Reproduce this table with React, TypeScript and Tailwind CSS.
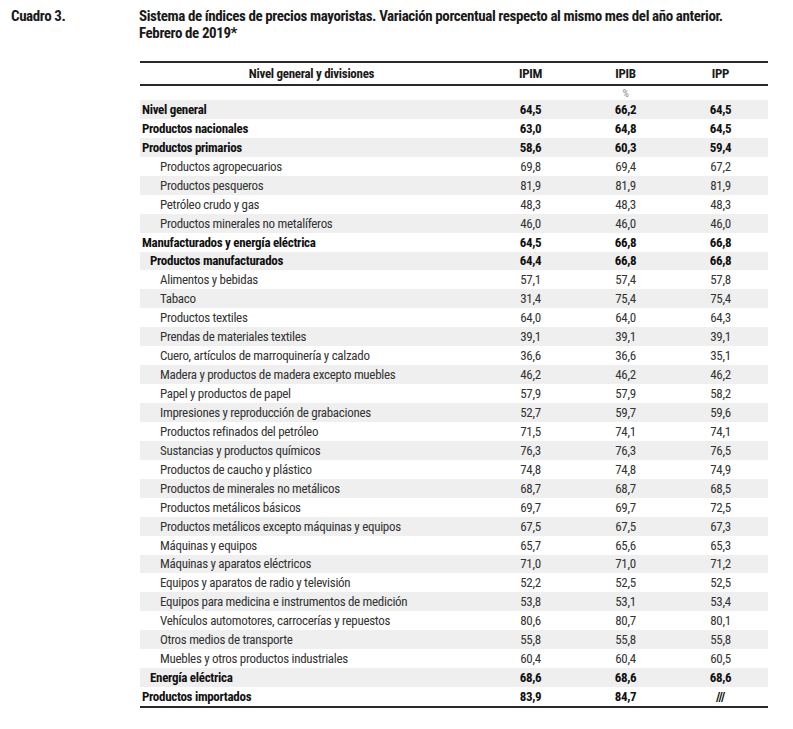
import React from "react";

type Row = { label: string; level: 0 | 1 | 2; bold?: boolean; v: [string, string, string] };

const rows: Row[] = [
  { label: "Nivel general", level: 0, bold: true, v: ["64,5", "66,2", "64,5"] },
  { label: "Productos nacionales", level: 0, bold: true, v: ["63,0", "64,8", "64,5"] },
  { label: "Productos primarios", level: 0, bold: true, v: ["58,6", "60,3", "59,4"] },
  { label: "Productos agropecuarios", level: 2, v: ["69,8", "69,4", "67,2"] },
  { label: "Productos pesqueros", level: 2, v: ["81,9", "81,9", "81,9"] },
  { label: "Petróleo crudo y gas", level: 2, v: ["48,3", "48,3", "48,3"] },
  { label: "Productos minerales no metalíferos", level: 2, v: ["46,0", "46,0", "46,0"] },
  { label: "Manufacturados y energía eléctrica", level: 0, bold: true, v: ["64,5", "66,8", "66,8"] },
  { label: "Productos manufacturados", level: 1, bold: true, v: ["64,4", "66,8", "66,8"] },
  { label: "Alimentos y bebidas", level: 2, v: ["57,1", "57,4", "57,8"] },
  { label: "Tabaco", level: 2, v: ["31,4", "75,4", "75,4"] },
  { label: "Productos textiles", level: 2, v: ["64,0", "64,0", "64,3"] },
  { label: "Prendas de materiales textiles", level: 2, v: ["39,1", "39,1", "39,1"] },
  { label: "Cuero, artículos de marroquinería y calzado", level: 2, v: ["36,6", "36,6", "35,1"] },
  { label: "Madera y productos de madera excepto muebles", level: 2, v: ["46,2", "46,2", "46,2"] },
  { label: "Papel y productos de papel", level: 2, v: ["57,9", "57,9", "58,2"] },
  { label: "Impresiones y reproducción de grabaciones", level: 2, v: ["52,7", "59,7", "59,6"] },
  { label: "Productos refinados del petróleo", level: 2, v: ["71,5", "74,1", "74,1"] },
  { label: "Sustancias y productos químicos", level: 2, v: ["76,3", "76,3", "76,5"] },
  { label: "Productos de caucho y plástico", level: 2, v: ["74,8", "74,8", "74,9"] },
  { label: "Productos de minerales no metálicos", level: 2, v: ["68,7", "68,7", "68,5"] },
  { label: "Productos metálicos básicos", level: 2, v: ["69,7", "69,7", "72,5"] },
  { label: "Productos metálicos excepto máquinas y equipos", level: 2, v: ["67,5", "67,5", "67,3"] },
  { label: "Máquinas y equipos", level: 2, v: ["65,7", "65,6", "65,3"] },
  { label: "Máquinas y aparatos eléctricos", level: 2, v: ["71,0", "71,0", "71,2"] },
  { label: "Equipos y aparatos de radio y televisión", level: 2, v: ["52,2", "52,5", "52,5"] },
  { label: "Equipos para medicina e instrumentos de medición", level: 2, v: ["53,8", "53,1", "53,4"] },
  { label: "Vehículos automotores, carrocerías y repuestos", level: 2, v: ["80,6", "80,7", "80,1"] },
  { label: "Otros medios de transporte", level: 2, v: ["55,8", "55,8", "55,8"] },
  { label: "Muebles y otros productos industriales", level: 2, v: ["60,4", "60,4", "60,5"] },
  { label: "Energía eléctrica", level: 1, bold: true, v: ["68,6", "68,6", "68,6"] },
  { label: "Productos importados", level: 0, bold: true, v: ["83,9", "84,7", "///"] },
];

const indent = { 0: "pl-[2px]", 1: "pl-[10px]", 2: "pl-[20px]" };

export default function App() {
  return (
    <div className="w-[793px] h-[729px] bg-white text-[#1a1a1a] font-['Roboto_Condensed','Roboto',sans-serif] font-stretch-condensed">
      <div className="flex pt-[8px]">
        <div className="w-[139px] pl-[11px] text-[15px] font-bold leading-[17px] tracking-[-0.4px]">Cuadro 3.</div>
        <div className="text-[15px] font-bold leading-[17px] tracking-[-0.4px]">
          <div>Sistema de índices de precios mayoristas. Variación porcentual respecto al mismo mes del año anterior.</div>
          <div>Febrero de 2019*</div>
        </div>
      </div>

      <div className="ml-[140px] mt-[19px] w-[628px] tracking-[-0.3px]">
        <div className="grid grid-cols-[343px_95px_95px_95px] h-[25px] items-center border-t-2 border-b-2 border-[#2a2a2a] text-[13px] font-bold">
          <div className="text-center">Nivel general y divisiones</div>
          <div className="text-center">IPIM</div>
          <div className="text-center">IPIB</div>
          <div className="text-center">IPP</div>
        </div>
        <div className="grid grid-cols-[343px_95px_95px_95px] h-[14px] items-center text-[10px] text-[#888]">
          <div />
          <div />
          <div className="text-center leading-none pt-[1px]">%</div>
          <div />
        </div>
        <div className="border-b-2 border-[#2a2a2a]">
          {rows.map((r, i) => (
            <div
              key={r.label}
              className={`grid grid-cols-[343px_95px_95px_95px] h-[18.95px] items-center text-[13px] leading-none ${
                i % 2 === 0 ? "bg-[#efefef]" : "bg-white"
              } ${r.bold ? "font-bold text-[#111]" : "text-[#333]"}`}
            >
              <div className={indent[r.level]}>{r.label}</div>
              <div className="text-center">{r.v[0]}</div>
              <div className="text-center">{r.v[1]}</div>
              <div className="text-center">{r.v[2]}</div>
            </div>
          ))}
        </div>
      </div>
    </div>
  );
}
